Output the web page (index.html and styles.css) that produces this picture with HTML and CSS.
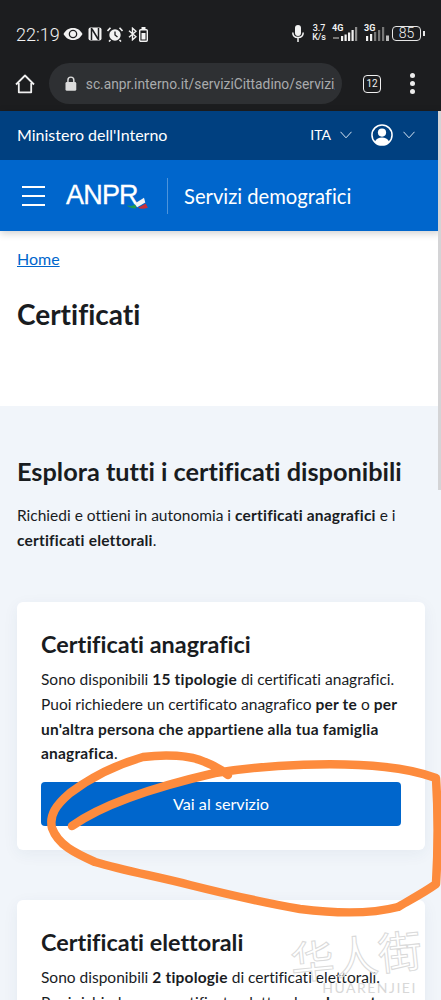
FILE: index.html
```html
<!DOCTYPE html>
<html lang="it">
<head>
  <meta charset="UTF-8">
  <meta name="viewport" content="width=device-width, initial-scale=1.0">
  <title>Certificati - ANPR</title>
  <link rel="stylesheet" href="styles.css">
</head>
<body>
  <!-- phone status bar -->
  <div class="status">
    <div class="status-left">
      <span class="clock">22:19</span>
      <svg width="20" height="14" viewBox="0 0 20 14"><path d="M0.5 7C3 2.500 6.500 1 10 1s7 1.500 9.500 6C17 11.500 13.500 13 10 13S3 11.500 0.500 7z" fill="#f2f2f2"/><circle cx="10" cy="7" r="4.300" fill="#1c1d1f"/><circle cx="10" cy="7" r="3" fill="#f2f2f2"/></svg>
      <svg width="14" height="14" viewBox="0 0 14 14"><rect x="0.500" y="0.500" width="13" height="13" rx="2" fill="#f2f2f2"/><path d="M3.500 1v12M10.500 1v12M4 2l6 10" stroke="#1c1d1f" stroke-width="1.500"/></svg>
      <svg width="16" height="15" viewBox="0 0 16 15"><circle cx="8" cy="8" r="5.700" fill="#f2f2f2"/><path d="M8 4.500V8l2.500 2" stroke="#1c1d1f" stroke-width="1.300" fill="none"/><path d="M0.500 4L3.500 0.800M15.500 4L12.500 0.800M3.500 13l-1.500 1.500M12.500 13l1.500 1.500" stroke="#f2f2f2" stroke-width="1.600"/></svg>
      <svg width="9" height="14" viewBox="0 0 9 14"><path d="M1 3.800l7 6-3.500 3V1.200l3.500 3-7 6" stroke="#f2f2f2" stroke-width="1.400" fill="none"/></svg>
      <svg class="tight" width="9" height="15" viewBox="0 0 9 15"><rect x="2.500" y="0" width="4" height="2" fill="#f2f2f2"/><rect x="0.700" y="2.700" width="7.600" height="11.600" rx="1" stroke="#f2f2f2" stroke-width="1.400" fill="none"/><rect x="2.500" y="6" width="4" height="6.500" fill="#f2f2f2"/></svg>
    </div>
    <div class="status-right">
      <svg width="12" height="17" viewBox="0 0 12 17"><rect x="3" y="0" width="6" height="11" rx="3" fill="#f2f2f2"/><path d="M0.800 7.500c0 3.200 2.200 5 5.200 5s5.200-1.800 5.200-5M6 12.500V17" stroke="#f2f2f2" stroke-width="1.500" fill="none"/></svg>
      <span class="speed">3.7<br>K/s</span>
      <span class="net">
        <span class="net-label">4G</span>
        <svg width="26" height="15" viewBox="0 0 26 15"><g fill="#f2f2f2"><rect x="9" y="9" width="2.200" height="5"/><rect x="12.500" y="7.500" width="2.200" height="6.500"/><rect x="16" y="5.500" width="2.200" height="8.500"/><rect x="19.500" y="3" width="2.200" height="11"/></g><rect x="23" y="0" width="2.200" height="14" fill="#8d8d8d"/><path d="M1 11h6" stroke="#777" stroke-width="2"/></svg>
      </span>
      <span class="net">
        <span class="net-label">3G</span>
        <svg width="26" height="15" viewBox="0 0 26 15"><rect x="2" y="9" width="2.200" height="5" fill="#f2f2f2"/><rect x="6" y="7" width="2.200" height="7" fill="#f2f2f2"/><g fill="#777"><rect x="10" y="5" width="2.200" height="9"/><rect x="14" y="3" width="2.200" height="11"/><rect x="18" y="0" width="2.200" height="14"/></g><path d="M22 8.500h3v5.500h-3z" fill="#bbb"/></svg>
      </span>
      <span class="battery"><span class="battery-level">85</span></span>
    </div>
  </div>

  <!-- browser toolbar -->
  <div class="toolbar">
    <svg width="20" height="20" viewBox="0 0 20 20"><path d="M1 10.500L10 1.500l9 9M3.800 9v9.300h12.400V9" fill="none" stroke="#f0f0f0" stroke-width="1.800" stroke-linejoin="round"/></svg>
    <div class="urlbar">
      <svg width="12" height="15" viewBox="0 0 12 15"><rect x="0.500" y="6" width="11" height="9" rx="1.500" fill="#dcdcdc"/><path d="M3 6.500V4a3 3 0 0 1 6 0v2.500" fill="none" stroke="#dcdcdc" stroke-width="1.500"/></svg>
      <span class="url">sc.anpr.interno.it/serviziCittadino/servizi/</span>
    </div>
    <span class="tabs">12</span>
    <span class="dots"><i></i><i></i><i></i></span>
  </div>

  <header>
    <div class="slim">
      <span class="ministry">Ministero dell'Interno</span>
      <div class="slim-right">
        <span class="lang">ITA</span>
        <svg width="12" height="8" viewBox="0 0 12 8"><path d="M0.500 0.800L6 6.800 11.500 0.800" fill="none" stroke="#d6e4f2" stroke-width="1"/></svg>
        <svg class="user" width="22" height="22" viewBox="0 0 23 23"><circle cx="11.500" cy="11.500" r="10.500" fill="#004080" stroke="#fff" stroke-width="1.600"/><circle cx="11.500" cy="9" r="4.300" fill="#fff"/><path d="M4 18.500c1.500-3.500 4.300-4.500 7.500-4.500s6 1 7.500 4.500c-2 2.300-4.700 3.500-7.500 3.500s-5.500-1.200-7.500-3.500z" fill="#fff"/></svg>
        <svg width="12" height="8" viewBox="0 0 12 8"><path d="M0.500 0.800L6 6.800 11.500 0.800" fill="none" stroke="#d6e4f2" stroke-width="1"/></svg>
      </div>
    </div>
    <div class="mainbar">
      <span class="burger"><i></i><i></i><i></i></span>
      <span class="logo">
        <span class="logo-text">ANPR</span>
        <svg width="24" height="12" viewBox="0 0 26 14"><path d="M0 9.500C4 11 7 10.500 10 8.500L11 13C7 13.500 3 12.500 0 9.500z" fill="#1f9a4d"/><path d="M9 8L20 1l1.500 5.500L12 12z" fill="#f4f4f4"/><path d="M13 12.500l9-5 2.500 5C20 14 16 14 13 12.500z" fill="#c8303a"/></svg>
      </span>
      <span class="sep"></span>
      <span class="service">Servizi demografici</span>
    </div>
  </header>

  <section class="intro">
    <a class="crumb" href="#">Home</a>
    <h1>Certificati</h1>
  </section>

  <main>
    <h2>Esplora tutti i certificati disponibili</h2>
    <p class="lead">Richiedi e ottieni in autonomia i <b>certificati anagrafici</b> e i <b>certificati elettorali</b>.</p>

    <div class="card">
      <h3>Certificati anagrafici</h3>
      <p>Sono disponibili <b>15 tipologie</b> di certificati anagrafici. Puoi richiedere un certificato anagrafico <b>per te</b> o <b>per un'altra persona che appartiene alla tua famiglia anagrafica</b>.</p>
      <a class="btn" href="#">Vai al servizio</a>
    </div>

    <div class="card">
      <h3>Certificati elettorali</h3>
      <p>Sono disponibili <b>2 tipologie</b> di certificati elettorali. Puoi richiedere un certificato elettorale <b>solo per te</b>.</p>
    </div>
  </main>

  <div class="scrollbar"></div>

  <!-- hand drawn circle on top of the shot -->
  <svg class="scribble" width="441" height="1000" viewBox="0 0 441 1000"><path d="M72 826C100 806 150 788 215 773C270 764 340 762 385 767C405 769 422 773 436 778C438 810 438 850 436 884C425 892 410 900 398 907C375 913 340 914 300 909C265 903 230 895 190 885C155 876 125 871 95 862C75 853 58 845 52 828C49 815 56 805 70 793C90 778 115 765 143 757C165 754 190 755 205 762C215 766 222 770 228 775" fill="none" stroke="#fd8b3d" stroke-width="8.500" stroke-linecap="round" stroke-linejoin="round"/></svg>

  <div class="mark">
    <span class="mark-cjk">华人街</span>
    <span class="mark-latin">HUARENJIEI</span>
  </div>
</body>
</html>
```

FILE: styles.css
```css
/* Base */
html, body {
  height: 1000px;
  overflow: hidden;
}

body {
  margin: 0;
  position: relative;
  background-color: #f1f5fa;
  color: #191c1f;
  font-family: 'Lato', sans-serif;
  font-size: 16px;
  font-variant-ligatures: none;
}

b {
  letter-spacing: 0.2px;
}

/* Status bar */
.status {
  height: 62px;
  box-sizing: border-box;
  padding: 21px 20px 0 16px;
  display: flex;
  justify-content: space-between;
  align-items: flex-start;
  background-color: #1c1d1f;
  color: #f2f2f2;
}

.status-left,
.status-right {
  display: flex;
  align-items: center;
  height: 24px;
}

.status-left {
  margin-top: 1px;
  gap: 5px;
}

.status-left .tight {
  margin-left: -3px;
}

.clock {
  font-family: 'Roboto', sans-serif;
  font-weight: 300;
  font-size: 18px;
  margin-right: -2px;
}

.status-right {
  gap: 6px;
}

.speed {
  font-family: 'Roboto', sans-serif;
  font-size: 9px;
  font-weight: 500;
  line-height: 9px;
  text-align: center;
  margin-left: 2px;
}

.net {
  position: relative;
  display: block;
  width: 26px;
  height: 18px;
}

.net svg {
  position: absolute;
  left: 0;
  bottom: 0;
}

.net-label {
  position: absolute;
  left: 0;
  top: 0;
  font-family: 'Roboto', sans-serif;
  font-size: 9px;
  font-weight: 700;
  line-height: 9px;
}

.battery {
  position: relative;
  width: 27px;
  height: 13px;
  border: 1px solid #e6e6e6;
  border-radius: 4px;
  margin-left: -4px;
  text-align: center;
  font-family: 'Roboto', sans-serif;
  font-weight: 300;
  font-size: 14px;
  line-height: 13px;
}

.battery::after {
  content: "";
  position: absolute;
  right: -5px;
  top: 4px;
  width: 2px;
  height: 5px;
  background-color: #e6e6e6;
}

/* Browser toolbar */
.toolbar {
  height: 49px;
  box-sizing: border-box;
  padding: 0 0 6px 15px;
  display: flex;
  align-items: center;
  background-color: #1c1d1f;
}

.urlbar {
  width: 293px;
  height: 41px;
  box-sizing: border-box;
  margin-left: 14px;
  padding: 0 7px 0 16px;
  display: flex;
  align-items: center;
  gap: 9px;
  border-radius: 21px;
  background-color: #2e3033;
  overflow: hidden;
}

.url {
  color: #a9abad;
  font-family: 'Roboto', sans-serif;
  font-size: 13.800px;
  white-space: nowrap;
  overflow: hidden;
}

.tabs {
  width: 16px;
  height: 16px;
  margin-left: 21px;
  border: 1.500px solid #f0f0f0;
  border-radius: 4px;
  color: #f0f0f0;
  font-family: 'Roboto', sans-serif;
  font-size: 10px;
  line-height: 16px;
  text-align: center;
}

.dots {
  margin-left: 29px;
  display: flex;
  flex-direction: column;
  gap: 3px;
}

.dots i {
  display: block;
  width: 5px;
  height: 5px;
  border-radius: 50%;
  background-color: #ececec;
}

/* Site header */
header {
  box-shadow: 0 2px 8px rgba(0, 0, 0, 0.2);
  position: relative;
}

.slim {
  height: 49px;
  box-sizing: border-box;
  padding: 0 26px 0 17px;
  display: flex;
  justify-content: space-between;
  align-items: center;
  background-color: #004080;
  color: #fff;
}

.ministry {
  font-size: 16px;
  margin-top: -2px;
}

.slim-right {
  display: flex;
  align-items: center;
  margin-top: -2px;
}

.lang {
  font-size: 14px;
  margin-right: 9px;
}

.user {
  margin: 0 10px 0 19px;
}

.mainbar {
  height: 71px;
  box-sizing: border-box;
  padding: 0 0 0 22px;
  display: flex;
  align-items: center;
  background-color: #0066cc;
  color: #fff;
}

.burger {
  width: 23px;
  display: flex;
  flex-direction: column;
  gap: 7px;
}

.burger i {
  display: block;
  height: 2px;
  background-color: #fff;
}

.logo {
  position: relative;
  width: 84px;
  margin-left: 21px;
}

.logo-text {
  font-family: 'Liberation Sans', sans-serif;
  font-size: 27px;
  letter-spacing: -0.800px;
  -webkit-text-stroke: 0.300px #fff;
}

.logo svg {
  position: absolute;
  right: 0;
  bottom: 2px;
}

.sep {
  width: 1px;
  height: 36px;
  margin-left: 17px;
  background-color: #4d94db;
}

.service {
  margin-left: 16px;
  font-size: 20.200px;
}

/* Page title */
.intro {
  height: 175px;
  box-sizing: border-box;
  padding: 18px 17px 0;
  background-color: #fff;
}

.crumb {
  color: #0066cc;
  font-size: 16px;
}

h1 {
  margin: 29px 0 0;
  font-size: 28px;
  font-weight: 700;
}

/* Content */
main {
  padding: 50px 16px 0 17px;
}

h2 {
  margin: 0;
  font-size: 25.300px;
  font-weight: 700;
  white-space: nowrap;
}

.lead {
  margin: 17px 0 0;
  line-height: 24.500px;
  font-size: 15.500px;
}

.card {
  margin: 50px 0;
  padding: 28px 24px 24px;
  border-radius: 6px;
  background-color: #fff;
  box-shadow: 0 4px 16px rgba(40, 70, 110, 0.06);
}

h3 {
  margin: 0;
  font-size: 23.400px;
  font-weight: 700;
  white-space: nowrap;
}

.card p {
  margin: 9px 0 0;
  line-height: 24.800px;
  font-size: 15.500px;
}

.btn {
  display: block;
  height: 44px;
  margin-top: 16px;
  border-radius: 4px;
  background-color: #0066cc;
  color: #fff;
  font-size: 16.200px;
  line-height: 44px;
  text-align: center;
  text-decoration: none;
}

/* Things lying over the page */
.scrollbar {
  position: absolute;
  top: 111px;
  right: 0;
  width: 3px;
  height: 379px;
  background-color: #d4d4d6;
}

.scribble {
  position: absolute;
  top: 0;
  left: 0;
}

.mark {
  position: absolute;
  left: 286px;
  top: 928px;
  width: 140px;
  text-align: center;
}

.mark-cjk {
  display: block;
  font-family: 'Noto Sans CJK SC', sans-serif;
  font-size: 44px;
  line-height: 52px;
  white-space: nowrap;
  color: rgba(255, 255, 255, 0.6);
  -webkit-text-stroke: 1px #dadada;
  transform: rotate(-6deg);
}

.mark-latin {
  display: block;
  padding-left: 27px;
  font-size: 14px;
  line-height: 16px;
  letter-spacing: 1.500px;
  color: #d8d8d8;
  white-space: nowrap;
}
```
